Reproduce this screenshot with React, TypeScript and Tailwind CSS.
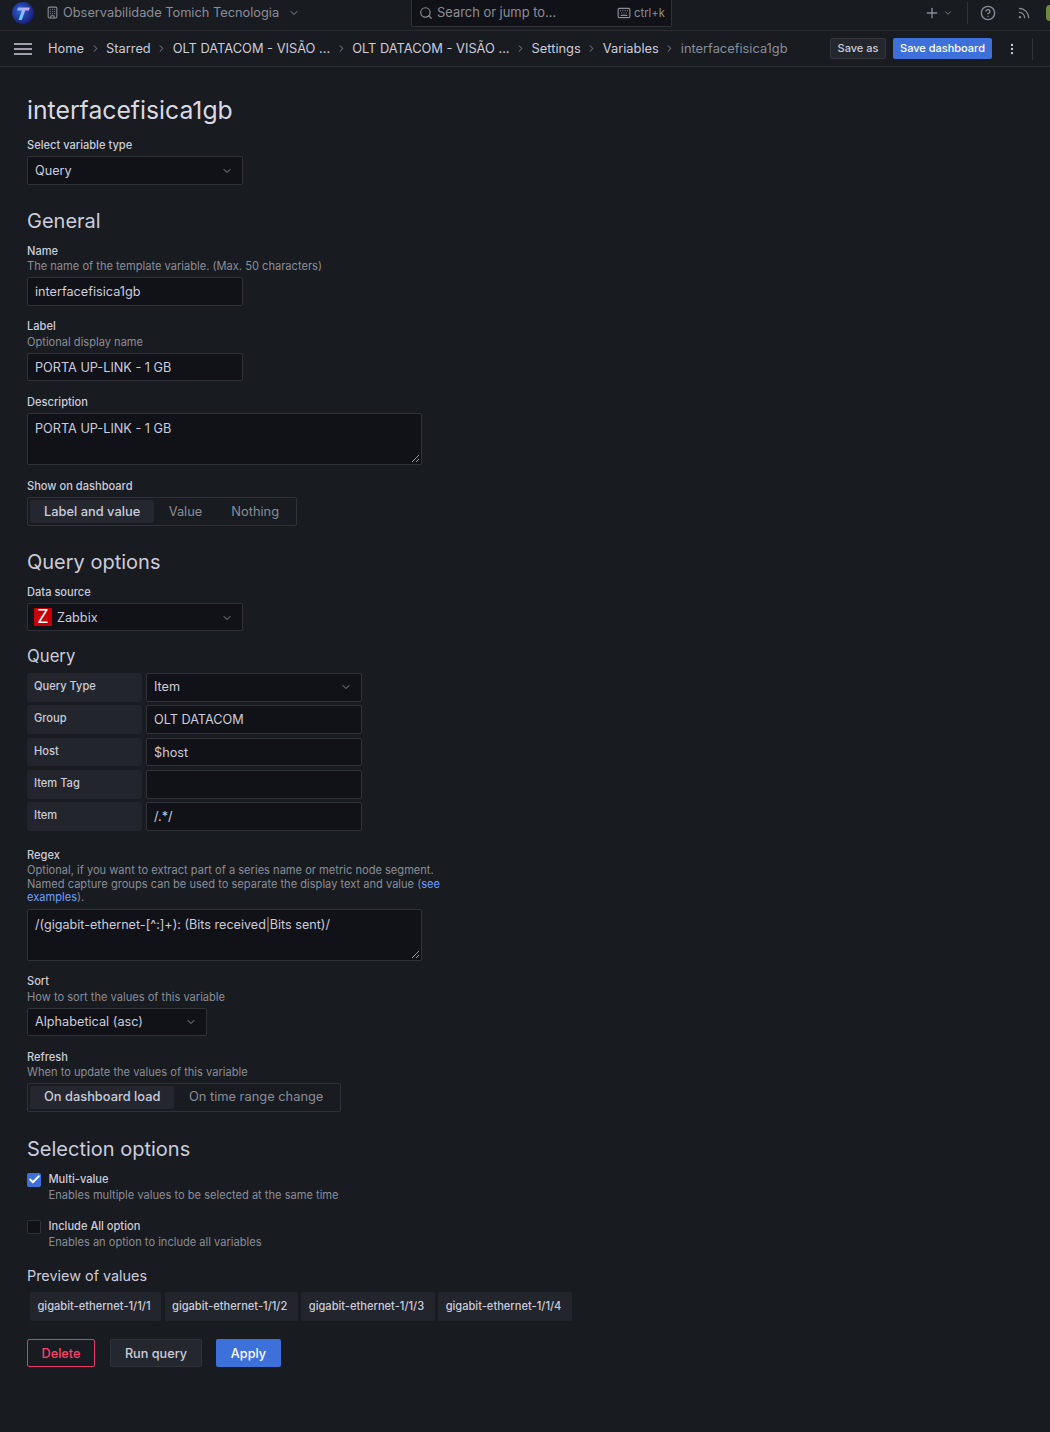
import { Fragment, type ReactNode } from 'react';
import { ChevronDown, ChevronRight, Search, Plus, Keyboard, Building, CircleHelp, Rss, MoreVertical, Check } from 'lucide-react';

const crumbs = ['Home', 'Starred', 'OLT DATACOM - VISÃO ...', 'OLT DATACOM - VISÃO ...', 'Settings', 'Variables'];

function Label({ title, desc, className, loose }: { title: string; desc?: string; className?: string; loose?: boolean }) {
  return (
    <div className={className}>
      <div className="text-[11.1px] leading-[15px] font-medium text-[#ccccdc]">{title}</div>
      {desc && <div className={`text-[11.1px] leading-[15px] text-[#8b8d98] ${loose ? 'mt-[1px]' : ''}`}>{desc}</div>}
    </div>
  );
}

function Input({ value, className }: { value: string; className?: string }) {
  return (
    <div className={`flex items-center h-[29px] px-[7px] bg-[#111217] border border-[#2f3237] rounded-[2px] text-[12.7px] text-[#ccccdc] ${className ?? ''}`}>
      {value}
    </div>
  );
}

function Select({ value, className, icon }: { value: string; className?: string; icon?: ReactNode }) {
  return (
    <div className={`flex items-center justify-between h-[29px] pl-[7px] pr-[9px] bg-[#111217] border border-[#2f3237] rounded-[2px] text-[12.7px] text-[#ccccdc] ${className ?? ''}`}>
      <span className="flex items-center gap-[5px]">
        {icon}
        {value}
      </span>
      <ChevronDown size={12} className="text-[#8b8d98]" />
    </div>
  );
}

function TextArea({ value, className }: { value: ReactNode; className?: string }) {
  return (
    <div className={`relative w-[395px] h-[52px] px-[7px] pt-[6px] bg-[#111217] border border-[#2f3237] rounded-[2px] leading-[18px] text-[#ccccdc] ${className ?? ''}`}>
      {value}
      <svg width="9" height="9" viewBox="0 0 9 9" className="absolute right-[1px] bottom-[1px] text-[#9a9ca5]">
        <path d="M1 8 8 1M5 8 8 5" stroke="currentColor" strokeWidth="1" />
      </svg>
    </div>
  );
}

function Radio({ options, className }: { options: string[]; className?: string }) {
  return (
    <div className={`flex items-center h-[29px] p-[2px] border border-[#2f3237] rounded-[2px] text-[12.85px] whitespace-nowrap ${className ?? ''}`}>
      {options.map((o, i) => (
        <div
          key={o}
          className={
            i === 0
              ? 'flex items-center h-[23px] px-[14px] bg-[#24272d] rounded-[2px] font-medium text-[#ccccdc]'
              : 'flex items-center h-[23px] px-[14.5px] text-[#8b8d98]'
          }
        >
          {o}
        </div>
      ))}
    </div>
  );
}

function QueryRow({ label, children, mt }: { label: string; children: ReactNode; mt: string }) {
  return (
    <div className={`flex gap-1 ${mt}`}>
      <div className="w-[115px] self-stretch pl-[7px] pt-[6px] bg-[#22252b] rounded-[2px] text-[11.1px] leading-[15px] font-medium text-[#ccccdc]">
        {label}
      </div>
      {children}
    </div>
  );
}

function CheckField({ title, desc, checked, mt }: { title: string; desc: string; checked?: boolean; mt: string }) {
  return (
    <div className={`flex gap-[7.5px] ${mt}`}>
      <div
        className={
          checked
            ? 'flex items-center justify-center w-[14px] h-[14px] mt-[1px] rounded-[2px] bg-[#3d71d9]'
            : 'w-[14px] h-[14px] mt-[1px] rounded-[2px] bg-[#111217] border border-[#2f3237]'
        }
      >
        {checked && <Check size={13} strokeWidth={3.5} className="text-white" />}
      </div>
      <div>
        <div className="text-[11.1px] leading-[15px] font-medium text-[#ccccdc]">{title}</div>
        <div className="text-[11.1px] leading-[16px] text-[#8b8d98]">{desc}</div>
      </div>
    </div>
  );
}

function Chip({ text }: { text: string }) {
  return (
    <div className="flex items-center h-[29px] pl-[7.5px] pr-[10.5px] bg-[#22252b] rounded-[2px] text-[11.1px] font-medium text-[#ccccdc] whitespace-nowrap">
      {text}
    </div>
  );
}

function Logo() {
  return (
    <svg width="22" height="22" viewBox="0 0 22 22" className="ml-3">
      <defs>
        <radialGradient id="orb" cx="40%" cy="40%" r="65%">
          <stop offset="0%" stopColor="#2f63d8" />
          <stop offset="100%" stopColor="#1a1a70" />
        </radialGradient>
        <linearGradient id="tee" x1="0" y1="1" x2="1" y2="0">
          <stop offset="0%" stopColor="#35e0f0" />
          <stop offset="100%" stopColor="#e39bf0" />
        </linearGradient>
      </defs>
      <circle cx="11" cy="11" r="11" fill="url(#orb)" />
      <path d="M6 5.5h12l-1.2 3h-3.6L9.8 18H6.6l3.2-9.5H5z" fill="url(#tee)" />
    </svg>
  );
}

export default function App() {
  return (
    <div className="w-[1050px] h-[1432px] overflow-hidden bg-[#181b1f] font-['Inter',sans-serif] text-[#ccccdc]">
      {/* top bar */}
      <header className="flex items-center h-[31px] pb-[5px] border-b border-[#2a2d32] relative">
        <Logo />
        <Building size={13} className="ml-[12px] text-[#8b8d98]" />
        <span className="ml-[4px] text-[12.8px] text-[#8b8d98]">Observabilidade Tomich Tecnologia</span>
        <ChevronDown size={12} className="ml-[9px] text-[#8b8d98]" />
        <div className="flex items-center absolute left-[411px] top-0 w-[261px] h-[27px] bg-[#111217] border-x border-b border-[#2f3237] rounded-b-[2px] pl-[7px] pr-[6px] text-[#8b8d98]">
          <Search size={14} />
          <span className="ml-[4px] text-[12.9px]">Search or jump to...</span>
          <Keyboard size={14} className="ml-auto" />
          <span className="ml-[3px] text-[11.3px]">ctrl+k</span>
        </div>
        <div className="ml-auto flex items-center text-[#8b8d98]">
          <Plus size={16} />
          <ChevronDown size={10} className="ml-[3px]" />
          <div className="ml-[14px] w-px h-[22px] bg-[#2f3237]" />
          <CircleHelp size={16} className="ml-[12px]" />
          <Rss size={14} className="ml-[21px]" />
          <div className="ml-[15px] w-[4px] h-[16px] rounded-l-full bg-[#6f8a3a]" />
        </div>
      </header>
      {/* breadcrumbs */}
      <nav className="flex items-center h-[36px] border-b border-[#2a2d32]">
        <svg width="18" height="12" viewBox="0 0 18 12" className="ml-[14px] text-[#ccccdc]">
          <path d="M0 1h18M0 6h18M0 11h18" stroke="currentColor" strokeWidth="1.5" />
        </svg>
        <div className="ml-[16px] flex items-center text-[12.85px] text-[#ccccdc]">
          {crumbs.map((c, i) => (
            <Fragment key={i}>
              {c}
              <ChevronRight size={11} className="mx-[5.5px] text-[#8b8d98]" />
            </Fragment>
          ))}
          <span className="text-[#8b8d98]">interfacefisica1gb</span>
        </div>
        <div className="ml-auto flex items-center">
          <button className="h-[21px] w-[56px] bg-[#24272d] border border-[#33363b] rounded-[2px] text-[11px] font-medium text-[#ccccdc]">Save as</button>
          <button className="ml-[7px] h-[21px] w-[99px] bg-[#3d71d9] rounded-[2px] text-[11px] font-medium text-white">Save dashboard</button>
          <MoreVertical size={14} className="ml-[13px] text-[#ccccdc]" />
          <div className="ml-[13px] mr-[17px] w-px h-[22px] bg-[#2f3237]" />
        </div>
      </nav>

      <main className="pl-[27px]">
        <h1 className="mt-[25px] text-[24.75px] leading-[36px] font-normal text-[#d8d9e2]">interfacefisica1gb</h1>
        <Label title="Select variable type" className="mt-[10px]" />
        <Select value="Query" className="mt-[3px] w-[216px]" />

        <h2 className="mt-[22px] text-[20px] leading-[28px] text-[#ccccdc]">General</h2>
        <Label title="Name" desc="The name of the template variable. (Max. 50 characters)" className="mt-[9px]" />
        <Input value="interfacefisica1gb" className="mt-[3px] w-[216px]" />
        <Label title="Label" desc="Optional display name" loose className="mt-[13px]" />
        <Input value="PORTA UP-LINK - 1 GB" className="mt-[3px] w-[216px] !h-[28px] pt-[1px]" />
        <Label title="Description" className="mt-[14px]" />
        <div className="mt-[3px]"><TextArea value="PORTA UP-LINK - 1 GB" className="text-[12.7px]" /></div>
        <Label title="Show on dashboard" className="mt-[14px]" />
        <Radio options={['Label and value', 'Value', 'Nothing']} className="mt-[3px] w-[270px]" />

        <h2 className="mt-[22px] text-[20px] leading-[28px]">Query options</h2>
        <Label title="Data source" className="mt-[9px]" />
        <Select
          value="Zabbix"
          className="mt-[3px] w-[216px] !h-[28px] !pl-[6px] pt-[1px]"
          icon={
            <span className="flex items-center justify-center w-[18px] h-[18px] bg-[#c70000] text-white text-[18px] leading-none">Z</span>
          }
        />
        <h3 className="mt-[13px] text-[16.7px] leading-[24px]">Query</h3>
        <QueryRow label="Query Type" mt="mt-[5px]">
          <Select value="Item" className="w-[216px] pb-[2px]" />
        </QueryRow>
        <QueryRow label="Group" mt="mt-[3px]"><Input value="OLT DATACOM" className="w-[216px]" /></QueryRow>
        <QueryRow label="Host" mt="mt-[4px]"><Input value="$host" className="w-[216px] !h-[28px] pt-[1px]" /></QueryRow>
        <QueryRow label="Item Tag" mt="mt-[4px]"><Input value="" className="w-[216px]" /></QueryRow>
        <QueryRow label="Item" mt="mt-[3px]"><Input value="/.*/" className="w-[216px]" /></QueryRow>

        <div className="mt-[16px] text-[11.1px] leading-[13.5px] whitespace-nowrap">
          <div className="font-medium leading-[17px] text-[#ccccdc]">Regex</div>
          <div className="text-[#8b8d98]">Optional, if you want to extract part of a series name or metric node segment.</div>
          <div className="text-[#8b8d98]">
            Named capture groups can be used to separate the display text and value (<span className="text-[#6e9fff]">see</span>
          </div>
          <div className="text-[#8b8d98]">
            <span className="text-[#6e9fff]">examples</span>).
          </div>
        </div>
        <div className="mt-[4px]">
          <TextArea
            className="text-[12.6px]"
            value={
              <>
                /(gigabit-ethernet-[^:]+): (Bits received<span className="font-light">|</span>Bits sent)/
              </>
            }
          />
        </div>
        <Label title="Sort" desc="How to sort the values of this variable" loose className="mt-[13px]" />
        <Select value="Alphabetical (asc)" className="mt-[3px] w-[180px] !h-[28px]" />
        <Label title="Refresh" desc="When to update the values of this variable" className="mt-[14px]" />
        <Radio options={['On dashboard load', 'On time range change']} className="mt-[3px] w-[314px]" />

        <h2 className="mt-[23px] text-[20px] leading-[28px]">Selection options</h2>
        <CheckField title="Multi-value" desc="Enables multiple values to be selected at the same time" checked mt="mt-[9px]" />
        <CheckField title="Include All option" desc="Enables an option to include all variables" mt="mt-[16px]" />
        <h3 className="mt-[14px] text-[14.4px] leading-[24px]">Preview of values</h3>
        <div className="mt-[4px] ml-[3px] flex gap-[3.5px]">
          <Chip text="gigabit-ethernet-1/1/1" />
          <Chip text="gigabit-ethernet-1/1/2" />
          <Chip text="gigabit-ethernet-1/1/3" />
          <Chip text="gigabit-ethernet-1/1/4" />
        </div>
        <div className="mt-[18px] flex">
          <button className="h-[28px] w-[68px] pt-[2px] border border-[#e6396a] rounded-[2px] text-[12.7px] font-medium text-[#ff3f6c]">Delete</button>
          <button className="ml-[15px] h-[28px] w-[92px] pt-[2px] bg-[#24272d] border border-[#2f3237] rounded-[2px] text-[12.7px] font-medium text-[#ccccdc]">Run query</button>
          <button className="ml-[14px] h-[28px] w-[65px] pt-[2px] bg-[#3d71d9] rounded-[2px] text-[12.7px] font-medium text-white">Apply</button>
        </div>
      </main>
    </div>
  );
}
